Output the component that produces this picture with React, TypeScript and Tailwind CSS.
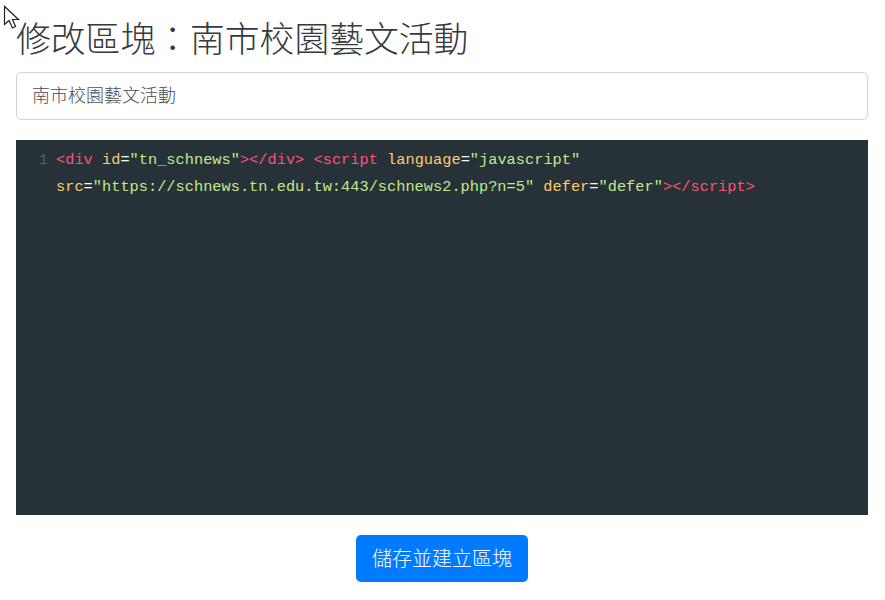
const cjk = "font-['Liberation_Sans','Noto_Sans_CJK_TC',sans-serif]"

function Cursor() {
  return (
    <svg className="absolute left-[3px] top-[5px]" width="18" height="25" viewBox="0 0 18 25">
      <path
        d="M1.5 1.5 L1.5 19.5 L6 15.5 L9.5 23 L12.5 21.5 L9.5 14.5 L15.5 14.5 Z"
        fill="#fff"
        stroke="#222"
        strokeWidth="1.2"
      />
    </svg>
  )
}

export default function App() {
  return (
    <div className={`relative h-[600px] w-[884px] overflow-hidden bg-white px-4 ${cjk}`}>
      <Cursor />
      <h2 className="h-[72px] pt-[17px] text-[34.8px] font-light leading-[45px] text-[#343a40]">
        修改區塊：南市校園藝文活動
      </h2>
      <div className="flex h-12 items-center rounded-[5px] border border-[#ced4da] px-[15px] text-[18px] font-light text-[#495057]">
        南市校園藝文活動
      </div>
      <div className="mt-5 flex h-[375px] bg-[#263238] pt-[7px] font-['Liberation_Mono','Noto_Sans_CJK_TC',monospace] text-[15.3px] leading-[27px]">
        <div className="w-[40px] shrink-0 pr-[8px] text-right text-[#4a6270]">1</div>
        <div className="min-w-0 flex-1 tracking-[0.015px] text-[#eeffff]">
          <div className="whitespace-pre">
            <span className="text-[#ff5370]">&lt;div</span>{' '}
            <span className="text-[#ffcb6b]">id</span>=
            <span className="text-[#c3e88d]">"tn_schnews"</span>
            <span className="text-[#ff5370]">&gt;&lt;/div&gt;</span>{' '}
            <span className="text-[#ff5370]">&lt;script</span>{' '}
            <span className="text-[#ffcb6b]">language</span>=
            <span className="text-[#c3e88d]">"javascript"</span>
          </div>
          <div className="whitespace-pre">
            <span className="text-[#ffcb6b]">src</span>=
            <span className="text-[#c3e88d]">"https://schnews.tn.edu.tw:443/schnews2.php?n=5"</span>{' '}
            <span className="text-[#ffcb6b]">defer</span>=
            <span className="text-[#c3e88d]">"defer"</span>
            <span className="text-[#ff5370]">&gt;&lt;/script&gt;</span>
          </div>
        </div>
      </div>
      <div className="mt-5 flex justify-center">
        <button className="h-[47px] w-[172px] rounded-[5px] bg-[#007bff] text-xl font-light text-white">
          儲存並建立區塊
        </button>
      </div>
    </div>
  )
}
